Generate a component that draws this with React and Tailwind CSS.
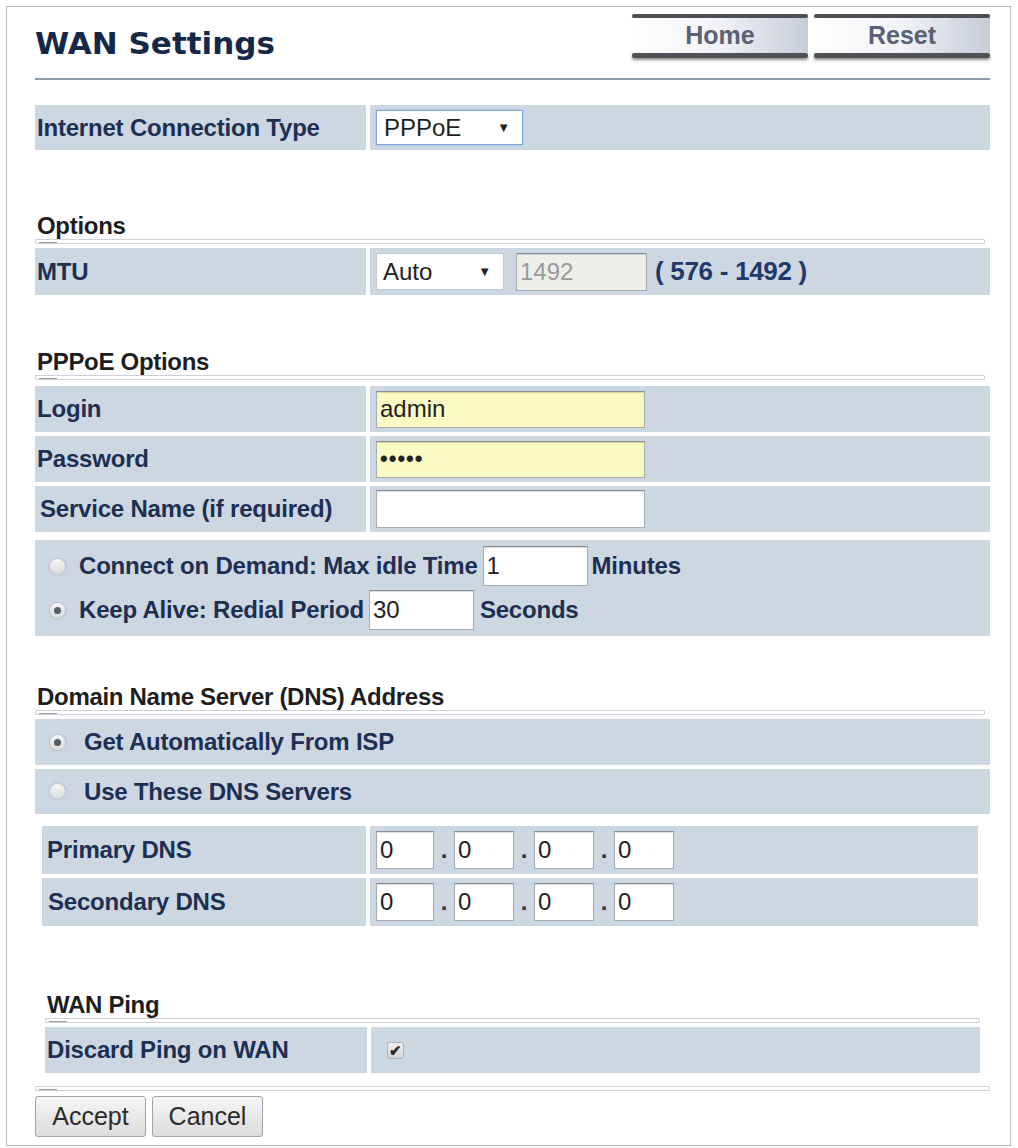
import React from "react";

const F = { fontFamily: '"Liberation Sans", Arial, sans-serif' };

function Sep({ className = "" }) {
  return (
    <div className={`relative h-[5px] border border-[#cdd0d4] rounded-[1px] bg-white ${className}`}>
      <div className="absolute left-[3px] bottom-[0px] w-[18px] h-[1px] bg-[#9aa0a6]" />
    </div>
  );
}

function Row({ label, children, h = "h-[46px]", labelW = "w-[331px]", pl = "pl-[2px]" }) {
  return (
    <div className={`flex gap-[4px] ${h}`}>
      <div className={`${labelW} shrink-0 bg-[#cdd7e2] flex items-center ${pl} text-[24px] font-bold text-[#1d2f52] tracking-[-0.2px] whitespace-nowrap`}>
        {label}
      </div>
      <div className="flex-1 bg-[#cdd7e2] flex items-center pl-[6px]">{children}</div>
    </div>
  );
}

function Input({ value = "", w = "w-[269px]", h = "h-[37px]", bg = "bg-white", color = "text-[#222]" }) {
  return (
    <div
      className={`${w} ${h} ${bg} ${color} border border-[#a9adb2] border-t-[#8a8e94] shadow-[inset_0_1px_1px_rgba(0,0,0,0.15)] flex items-center pl-[3px] text-[24px] font-normal tracking-normal leading-none overflow-hidden`}
    >
      {value}
    </div>
  );
}

function Radio({ checked }) {
  return (
    <div className="w-[17px] h-[17px] shrink-0 rounded-full border border-[#c6c9cd] bg-gradient-to-b from-[#f6f6f6] to-[#dadada] flex items-center justify-center shadow-[0_0_2px_rgba(0,0,0,0.15)]">
      {checked && <div className="w-[7px] h-[7px] rounded-full bg-[#5a5f66]" />}
    </div>
  );
}

function TopButton({ children }) {
  return (
    <div className="w-[176px] h-[44px] flex flex-col">
      <div className="h-[4px] bg-[#4d4f53] rounded-[2px] shadow-[0_1px_1px_rgba(0,0,0,0.3)]" />
      <div className="flex-1 bg-gradient-to-r from-white via-[#f1f3f6] to-[#c6cdd7] flex items-center justify-center text-[25px] font-bold text-[#5b6176] leading-none">
        {children}
      </div>
      <div className="h-[5px] bg-[#505256] rounded-[2px] shadow-[0_2px_3px_rgba(0,0,0,0.45)]" />
    </div>
  );
}

function Dot() {
  return <span className="w-[20px] text-center text-[24px] font-bold text-[#333] leading-none">.</span>;
}

function DnsInputs() {
  return (
    <div className="flex items-center">
      <Input value="0" w="w-[58px]" h="h-[38px]" />
      <Dot />
      <Input value="0" w="w-[60px]" h="h-[38px]" />
      <Dot />
      <Input value="0" w="w-[60px]" h="h-[38px]" />
      <Dot />
      <Input value="0" w="w-[60px]" h="h-[38px]" />
    </div>
  );
}

const heading = "ml-[2px] text-[24px] font-bold text-[#1e1e1e] leading-[26px] tracking-[-0.3px]";

export default function App() {
  return (
    <div className="w-[1018px] h-[1148px] bg-white pt-[6px] pl-[6px]" style={F}>
      <div className="w-[1005px] h-[1140px] border border-[#b3bac2] pl-[28px] pr-[20px]">
        {/* Header */}
        <div className="flex justify-between items-start pt-[7px] h-[51px]">
          <div
            className="pt-[14px] text-[31px] font-bold text-[#14284a] leading-[31px]"
            style={{ fontFamily: '"DejaVu Sans", Verdana, sans-serif' }}
          >
            WAN Settings
          </div>
          <div className="flex gap-[6px]">
            <TopButton>Home</TopButton>
            <TopButton>Reset</TopButton>
          </div>
        </div>
        <div className="mt-[20px] h-[2px] bg-[#8d9aa7]" />

        {/* Internet Connection Type */}
        <div className="mt-[25px]">
          <Row label="Internet Connection Type" h="h-[45px]">
            <div className="w-[147px] h-[35px] bg-white border border-[#7fa7d8] shadow-[0_0_2px_#9bbce6] flex items-center justify-between pl-[7px] pr-[12px] text-[24px] text-[#222] leading-none">
              <span>PPPoE</span>
              <span className="text-[13px]">▼</span>
            </div>
          </Row>
        </div>

        {/* Options */}
        <div className={`mt-[63px] ${heading}`}>Options</div>
        <Sep className="mr-[5px]" />
        <div className="mt-[4px]">
          <Row label="MTU" h="h-[47px]">
            <div className="flex items-center">
              <div className="w-[128px] h-[37px] bg-white border border-[#c6c9cc] flex items-center justify-between pl-[6px] pr-[12px] text-[24px] text-[#222] leading-none">
                <span>Auto</span>
                <span className="text-[13px]">▼</span>
              </div>
              <div className="ml-[12px]">
                <Input value="1492" w="w-[131px]" h="h-[38px]" bg="bg-[#efefea]" color="text-[#9a9a9a]" />
              </div>
              <span className="ml-[8px] text-[26px] font-bold text-[#1f3a6a] tracking-[-0.3px]">( 576 - 1492 )</span>
            </div>
          </Row>
        </div>

        {/* PPPoE Options */}
        <div className={`mt-[54px] ${heading}`}>PPPoE Options</div>
        <Sep className="mr-[5px]" />
        <div className="mt-[6px] flex flex-col gap-[4px]">
          <Row label="Login">
            <Input value="admin" bg="bg-[#fbfbc4]" />
          </Row>
          <Row label="Password">
            <Input value={<span className="text-[22px] font-bold tracking-[1px] leading-none">•••••</span>} bg="bg-[#fbfbc4]" />
          </Row>
          <Row label="Service Name (if required)" pl="pl-[5px]">
            <Input value="" h="h-[38px]" />
          </Row>
        </div>
        <div className="mt-[8px] h-[96px] bg-[#cdd7e2] flex flex-col justify-center gap-[4px] pl-[14px] text-[24px] font-bold text-[#1d2f52] tracking-[-0.2px]">
          <div className="flex items-center">
            <Radio />
            <span className="ml-[13px]">Connect on Demand: Max idle Time</span>
            <div className="ml-[5px]">
              <Input value="1" w="w-[105px]" h="h-[40px]" />
            </div>
            <span className="ml-[4px]">Minutes</span>
          </div>
          <div className="flex items-center">
            <Radio checked />
            <span className="ml-[13px]">Keep Alive: Redial Period</span>
            <div className="ml-[5px]">
              <Input value="30" w="w-[105px]" h="h-[40px]" />
            </div>
            <span className="ml-[6px]">Seconds</span>
          </div>
        </div>

        {/* DNS */}
        <div className={`mt-[48px] ${heading}`}>Domain Name Server (DNS) Address</div>
        <Sep className="mr-[5px]" />
        <div className="mt-[4px] flex flex-col gap-[4px]">
          <div className="h-[46px] bg-[#cdd7e2] flex items-center pl-[14px] text-[24px] font-bold text-[#1d2f52] tracking-[-0.2px]">
            <Radio checked />
            <span className="ml-[18px]">Get Automatically From ISP</span>
          </div>
          <div className="h-[45px] bg-[#cdd7e2] flex items-center pl-[14px] text-[24px] font-bold text-[#1d2f52] tracking-[-0.2px]">
            <Radio />
            <span className="ml-[18px]">Use These DNS Servers</span>
          </div>
        </div>
        <div className="mt-[12px] ml-[7px] mr-[12px] flex flex-col gap-[4px]">
          <Row label="Primary DNS" h="h-[48px]" labelW="w-[324px]" pl="pl-[5px]">
            <DnsInputs />
          </Row>
          <Row label="Secondary DNS" h="h-[48px]" labelW="w-[324px]" pl="pl-[6px]">
            <DnsInputs />
          </Row>
        </div>

        {/* WAN Ping */}
        <div className="ml-[10px] mr-[10px]">
          <div className={`mt-[66px] ${heading}`}>WAN Ping</div>
          <Sep />
          <div className="mt-[4px]">
            <Row label="Discard Ping on WAN" h="h-[46px]" labelW="w-[322px]" pl="pl-[2px]">
              <div className="ml-[10px] w-[17px] h-[17px] rounded-[3px] border border-[#b0b3b7] bg-gradient-to-b from-[#f0f0f0] to-[#d4d4d4] flex items-center justify-center text-[15px] font-bold leading-none text-[#2a2a2a]">
                ✔
              </div>
            </Row>
          </div>
        </div>

        <Sep className="mt-[13px]" />
        <div className="mt-[5px] flex gap-[6px]">
          <button className="w-[111px] h-[41px] border border-[#a3a3a3] rounded-[3px] bg-gradient-to-b from-[#f6f6f6] to-[#dcdcdc] text-[25px] text-[#2b2b2b] leading-none">
            Accept
          </button>
          <button className="w-[111px] h-[41px] border border-[#a3a3a3] rounded-[3px] bg-gradient-to-b from-[#f6f6f6] to-[#dcdcdc] text-[25px] text-[#2b2b2b] leading-none">
            Cancel
          </button>
        </div>
      </div>
    </div>
  );
}
